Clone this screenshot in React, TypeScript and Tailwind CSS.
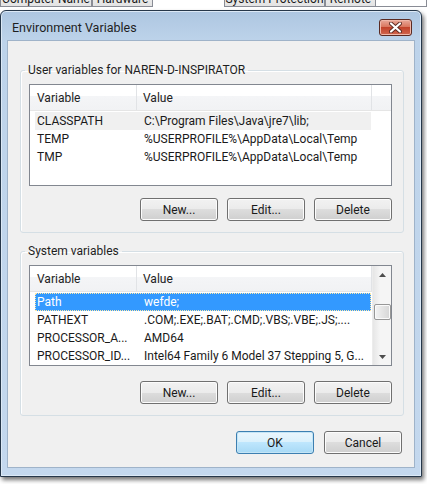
import React from 'react';

type Row = { name: string; value: string; state?: 'active' | 'inactive' };

const userRows: Row[] = [
  { name: 'CLASSPATH', value: 'C:\\Program Files\\Java\\jre7\\lib;', state: 'inactive' },
  { name: 'TEMP', value: '%USERPROFILE%\\AppData\\Local\\Temp' },
  { name: 'TMP', value: '%USERPROFILE%\\AppData\\Local\\Temp' },
];

const systemRows: Row[] = [
  { name: 'Path', value: 'wefde;', state: 'active' },
  { name: 'PATHEXT', value: '.COM;.EXE;.BAT;.CMD;.VBS;.VBE;.JS;....' },
  { name: 'PROCESSOR_A...', value: 'AMD64' },
  { name: 'PROCESSOR_ID...', value: 'Intel64 Family 6 Model 37 Stepping 5, G...' },
];

const tabs = [
  { label: 'Computer Name', w: 'w-[92px]', active: false },
  { label: 'Hardware', w: 'w-[61px]', active: false },
  { label: 'Advanced', w: 'w-[71px]', active: true },
  { label: 'System Protection', w: 'w-[101px]', active: false },
  { label: 'Remote', w: 'w-[51px]', active: false },
];

function Btn({ children, primary }: { children: React.ReactNode; primary?: boolean }) {
  return (
    <button
      className={
        primary
          ? 'h-[23px] w-[78px] rounded-[3px] border border-[#3c7fb1] bg-[linear-gradient(#eaf6fd,#d9f0fc_50%,#bee6fd_50%,#a7d9f5)] text-[12px] text-[#1a1a1a] shadow-[inset_0_0_0_1px_#c4e5f6]'
          : 'h-[23px] w-[78px] rounded-[3px] border border-[#707070] bg-[linear-gradient(#f2f2f2,#ebebeb_50%,#dddddd_50%,#cfcfcf)] text-[12px] text-[#1a1a1a] shadow-[inset_0_0_0_1px_#fcfcfc]'
      }
    >
      {children}
    </button>
  );
}

function Header({ scroll }: { scroll?: boolean }) {
  return (
    <div className="flex h-[26px] border-b border-[#e5e5e5] bg-[linear-gradient(#ffffff,#ffffff_45%,#f4f5f7_45%,#f1f2f4)] text-[12px] text-[#222]">
      <div className="flex w-[107px] items-center border-r border-[#e1e3e6] pl-[7px]">Variable</div>
      <div className="flex w-[235px] items-center border-r border-[#e1e3e6] pl-[6px]">Value</div>
      {!scroll && <div className="flex-1" />}
    </div>
  );
}

function ListRow({ row }: { row: Row }) {
  const cls =
    row.state === 'active'
      ? 'bg-[#3399ff] text-white outline outline-1 outline-dotted outline-[#ffe9a6] -outline-offset-1'
      : row.state === 'inactive'
        ? 'bg-[#f0f0f0] text-[#1a1a1a]'
        : 'text-[#1a1a1a]';
  return (
    <div className={`ml-[5px] flex h-[18px] w-[336px] items-center whitespace-nowrap text-[12px] ${cls}`}>
      <div className="w-[102px] overflow-hidden pl-[2px]">{row.name}</div>
      <div className="flex-1 overflow-hidden pl-[7px]">{row.value}</div>
    </div>
  );
}

function ScrollBar() {
  return (
    <div className="flex w-[19px] flex-col items-center border-l border-[#ececec] bg-[linear-gradient(90deg,#e6e6e6,#f5f5f5_40%,#f5f5f5)]">
      <div className="flex h-[17px] w-full items-center justify-center">
        <svg width="7" height="4" viewBox="0 0 7 4"><path d="M0 4 L3.5 0 L7 4 Z" fill="#4d4d4d" /></svg>
      </div>
      <div className="mt-[21px] h-[16px] w-[17px] rounded-[2px] border border-[#979797] bg-[linear-gradient(90deg,#f3f3f3,#e4e4e4_50%,#d6d6d6)] shadow-[inset_0_0_0_1px_#fafafa]" />
      <div className="flex-1" />
      <div className="flex h-[17px] w-full items-center justify-center">
        <svg width="7" height="4" viewBox="0 0 7 4"><path d="M0 0 L7 0 L3.5 4 Z" fill="#4d4d4d" /></svg>
      </div>
    </div>
  );
}

function VarGroup({ title, rows, scroll }: { title: string; rows: Row[]; scroll?: boolean }) {
  return (
    <fieldset className="w-[384px] rounded-[3px] border border-[#d5dfe5] pb-[11px] pl-[8px] pr-[11px] pt-[6px] shadow-[inset_1px_1px_0_#ffffff]">
      <legend className="-ml-[4px] px-[3px] text-[12px] leading-[16px] text-[#1e1e1e]">{title}</legend>
      <div className={`flex border border-[#828790] bg-white ${scroll ? 'h-[101px]' : 'h-[102px]'}`}>
        <div className="flex-1">
          <Header scroll={scroll} />
          <div className="pt-[1px]">
            {rows.map((r) => (
              <ListRow key={r.name} row={r} />
            ))}
          </div>
        </div>
        {scroll && <ScrollBar />}
      </div>
      <div className={`flex justify-end gap-[9px] ${scroll ? 'mt-[15px]' : 'mt-[12px]'}`}>
        <Btn>New...</Btn>
        <Btn>Edit...</Btn>
        <Btn>Delete</Btn>
      </div>
    </fieldset>
  );
}

export default function App() {
  return (
    <div className="h-[484px] w-[427px] overflow-hidden bg-white font-['Roboto',sans-serif]">
      {/* tabs of the dialog behind */}
      <div className="flex h-[10px] items-start overflow-hidden">
        {tabs.map((t) => (
          <div
            key={t.label}
            className={
              t.active
                ? `${t.w} -mt-[10px] h-[17px] shrink-0 bg-white`
                : `${t.w} -mt-[10px] flex h-[17px] shrink-0 items-center justify-center whitespace-nowrap border border-[#898c95] bg-[linear-gradient(#f2f2f2,#e3e3e3)] text-[12px] text-[#1a1a1a]`
            }
          >
            {!t.active && t.label}
          </div>
        ))}
        <div className="-mt-[10px] h-[17px] flex-1 border-b border-r border-[#898c95]" />
      </div>

      {/* window */}
      <div className="flex h-[467px] w-[422px] flex-col rounded-t-[6px] border border-[#26374a] bg-[linear-gradient(#adc6e1,#bdd3ea_30px,#c4d8ee)] px-[6px] pb-[8px] shadow-[2px_3px_4px_rgba(0,0,0,0.55),inset_0_0_0_1px_#dce9f6]">
        <div className="flex h-[29px] items-start justify-between pl-[5px] pr-[3px]">
          <div className="pt-[9px] text-[12.5px] leading-[16px] text-[#1e1e1e]">Environment Variables</div>
          <div className="mt-[8px] flex h-[17px] w-[33px] items-center justify-center rounded-[3px] border border-[#5a2a22] bg-[linear-gradient(#e9a99a,#d9775f_45%,#c2432b_50%,#d0674f)] shadow-[inset_0_0_0_1px_#f0b8aa]">
            <svg width="13" height="11" viewBox="0 0 13 11">
              <path d="M2 1.5 L11 9.5 M11 1.5 L2 9.5" stroke="#5b2a22" strokeWidth="4" strokeLinecap="round" />
              <path d="M2 1.5 L11 9.5 M11 1.5 L2 9.5" stroke="#ffffff" strokeWidth="2.2" strokeLinecap="round" />
            </svg>
          </div>
        </div>

        <div className="flex h-[428px] flex-col border border-[#9fb3c9] bg-[#f0f0f0] pl-[12px]">
          <div className="mt-[21px]">
            <VarGroup title="User variables for NAREN-D-INSPIRATOR" rows={userRows} />
          </div>
          <div className="mt-[10px]">
            <VarGroup title="System variables" rows={systemRows} scroll />
          </div>
          <div className="mt-[15px] flex justify-end gap-[10px] pr-[12px]">
            <Btn primary>OK</Btn>
            <Btn>Cancel</Btn>
          </div>
        </div>
      </div>
    </div>
  );
}
